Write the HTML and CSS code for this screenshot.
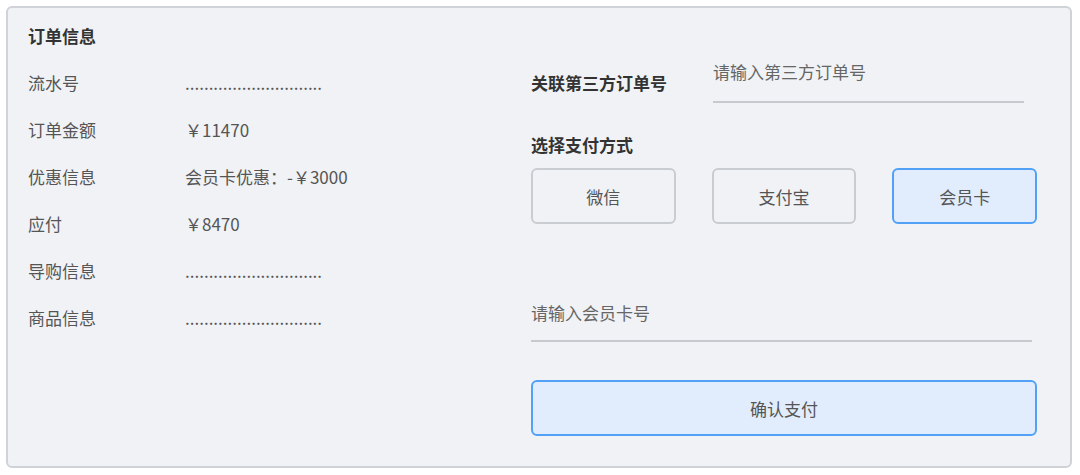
FILE: index.html
```html
<!DOCTYPE html>
<html lang="zh-CN">
<head>
<meta charset="UTF-8">
<meta name="viewport" content="width=device-width, initial-scale=1.0">
<title>订单支付</title>
    <link rel="stylesheet" href="styles.css">
</head>
<body>
<div class="panel">
    <!-- 左侧：订单信息 -->
    <div class="order-info">
        <div class="section-title">订单信息</div>
        <div class="info-row"><span class="info-label">流水号</span><span class="info-value">.............................</span></div>
        <div class="info-row"><span class="info-label">订单金额</span><span class="info-value">￥11470</span></div>
        <div class="info-row"><span class="info-label">优惠信息</span><span class="info-value">会员卡优惠：-￥3000</span></div>
        <div class="info-row"><span class="info-label">应付</span><span class="info-value">￥8470</span></div>
        <div class="info-row"><span class="info-label">导购信息</span><span class="info-value">.............................</span></div>
        <div class="info-row"><span class="info-label">商品信息</span><span class="info-value">.............................</span></div>
    </div>

    <!-- 右侧：支付 -->
    <div class="pay-box">
        <div class="link-row">
            <label class="section-title link-label" for="thirdOrder">关联第三方订单号</label>
            <input class="line-input third-input" id="thirdOrder" type="text" placeholder="请输入第三方订单号">
        </div>

        <div class="section-title pay-title">选择支付方式</div>
        <div class="pay-methods">
            <button class="pay-btn">微信</button>
            <button class="pay-btn">支付宝</button>
            <button class="pay-btn active">会员卡</button>
        </div>

        <input class="line-input card-input" type="text" placeholder="请输入会员卡号">

        <button class="pay-btn confirm-btn">确认支付</button>
    </div>
</div>
</body>
</html>
```

FILE: styles.css
```css
body {
    font-family: 'Noto Sans CJK SC', 'Noto Sans', sans-serif;
    margin: 0;
    padding: 6px;
    background-color: #ffffff;
    color: #555555;
}
.panel {
    box-sizing: border-box;
    width: 1066px;
    height: 462px;
    background-color: #f0f2f5;
    border: 2px solid #cfd3d8;
    border-radius: 6px;
    padding: 16px 33px 0 20px;
    display: grid;
    grid-template-columns: 503px 1fr;
}
.section-title {
    font-size: 17px;
    font-weight: bold;
    line-height: 24px;
    color: #333333;
}
.info-row {
    display: flex;
    margin-top: 23px;
    font-size: 17px;
    line-height: 24px;
}
.info-label {
    width: 157px;
    flex-shrink: 0;
}
.info-value {
    color: #555555;
}
.link-row {
    display: flex;
    align-items: flex-start;
    margin-top: 32px;
}
.link-label {
    width: 182px;
    padding-top: 15px;
}
.line-input {
    box-sizing: border-box;
    font-family: inherit;
    font-size: 17px;
    color: #333333;
    background: transparent;
    border: none;
    border-bottom: 2px solid #c6cacf;
    outline: none;
    padding: 4px 0 0 0;
}
.line-input::placeholder {
    color: #666666;
}
.third-input {
    width: 311px;
    height: 47px;
    padding-bottom: 18px;
}
.pay-title {
    margin-top: 30px;
}
.pay-methods {
    display: grid;
    grid-template-columns: repeat(3, 1fr);
    gap: 36px;
    margin-top: 11px;
}
.pay-btn {
    box-sizing: border-box;
    height: 56px;
    font-family: inherit;
    font-size: 17px;
    color: #555555;
    background-color: #f0f2f5;
    border: 2px solid #c9cdd2;
    border-radius: 6px;
    cursor: pointer;
}
.pay-btn.active {
    background-color: #e1edfc;
    border-color: #52a1f6;
}
.card-input {
    display: block;
    width: 501px;
    height: 45px;
    margin-top: 73px;
    padding-bottom: 16px;
}
.confirm-btn {
    display: block;
    width: 100%;
    margin-top: 38px;
    background-color: #e1edfc;
    border-color: #52a1f6;
}
```
